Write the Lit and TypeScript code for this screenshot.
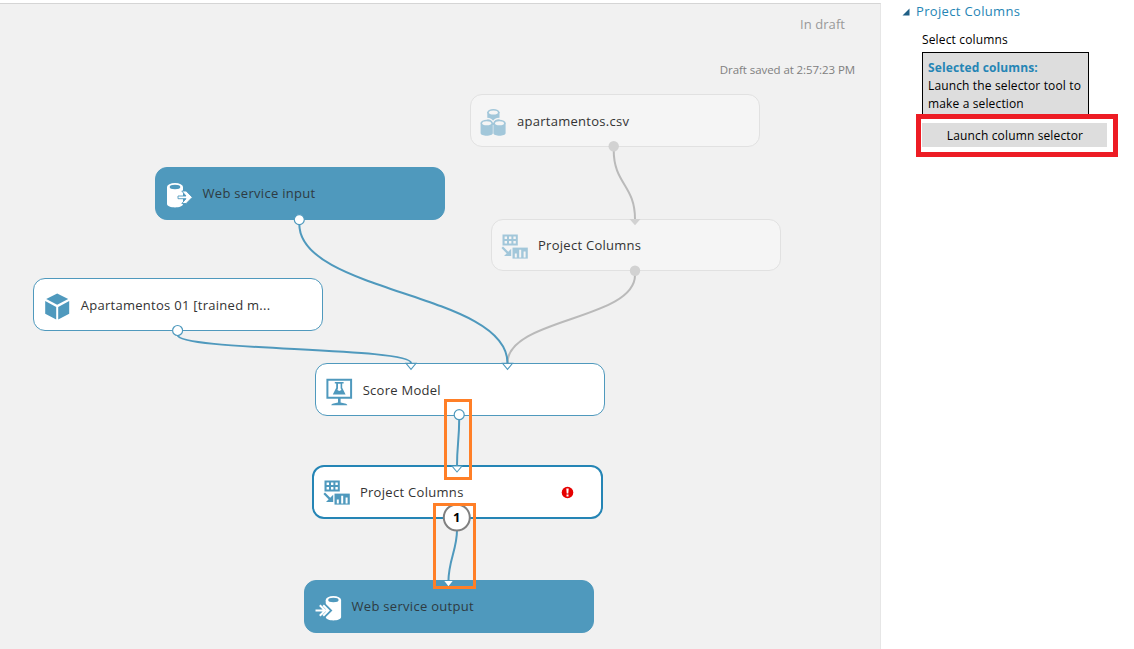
import { LitElement, html, css, svg } from "lit";
import { customElement, property } from "lit/decorators.js";
import { classMap } from "lit/directives/class-map.js";

type Kind = "dataset" | "input" | "output" | "columns" | "model" | "score";
interface NodeData {
  x: number; y: number; w: number; h: number;
  label: string; icon: Kind; variant: "plain" | "muted" | "solid" | "selected"; error?: boolean;
}

const NODES: NodeData[] = [
  { x: 470, y: 94, w: 290, h: 53, label: "apartamentos.csv", icon: "dataset", variant: "muted" },
  { x: 155, y: 167, w: 290, h: 53, label: "Web service input", icon: "input", variant: "solid" },
  { x: 491, y: 218.7, w: 290, h: 52.6, label: "Project Columns", icon: "columns", variant: "muted" },
  { x: 33.3, y: 278.4, w: 290, h: 52.6, label: "Apartamentos 01 [trained m...", icon: "model", variant: "plain" },
  { x: 315.2, y: 363, w: 290, h: 53, label: "Score Model", icon: "score", variant: "plain" },
  { x: 312.4, y: 465, w: 291, h: 53.6, label: "Project Columns", icon: "columns", variant: "selected", error: true },
  { x: 304, y: 580, w: 290, h: 53, label: "Web service output", icon: "output", variant: "solid" },
];

const cylinder = (x: number, y: number) => svg`
  <path d="M${x} ${y + 3} v10.2 c0 3.6 12.2 3.6 12.2 0 v-10.2z" fill="currentColor"/>
  <ellipse cx=${x + 6.1} cy=${y + 3.2} rx="6.1" ry="3.2" fill="currentColor"/>
  <ellipse cx=${x + 6.1} cy=${y + 3.5} rx="4.5" ry="2" fill="var(--hole)"/>`;

const ICONS: Record<Kind, unknown> = {
  dataset: svg`${cylinder(7.3, 0)}
    <path d="M.3 14c0-6 12.8-6 12.8 0M13.1 14c0-6 12.8-6 12.8 0" stroke="var(--hole)" stroke-width="1.4" fill="none"/>
    ${cylinder(0.6, 10.8)}${cylinder(13.4, 10.8)}`,
  input: svg`
    <path d="M1 5v17c0 4.5 16 4.5 16 0V5z" fill="currentColor"/>
    <ellipse cx="9" cy="5" rx="8" ry="4" fill="currentColor"/>
    <ellipse cx="9" cy="5" rx="5.3" ry="2.2" fill="var(--hole)"/>
    <path d="M12 14h8l-4.2-5h4.4l6.1 6.3-6.1 6.2h-4.4l4.2-4.8h-8z" fill="currentColor" stroke="var(--hole)" stroke-width=".9"/>`,
  output: svg`
    <path d="M10.7 5v17c0 4.5 15.4 4.5 15.4 0V5z" fill="currentColor"/>
    <ellipse cx="18.4" cy="5" rx="7.7" ry="4" fill="currentColor"/>
    <ellipse cx="18.4" cy="5" rx="5.2" ry="2.2" fill="var(--hole)"/>
    <path d="M8.6 9.8l5.7 5.7-5.7 5.7" fill="none" stroke="var(--hole)" stroke-width="4.4"/>
    <path d="M.5 15.5h12M4.8 10.2l5.3 5.3-5.3 5.3M8.2 10.2l5.3 5.3-5.3 5.3" fill="none" stroke="currentColor" stroke-width="2"/>`,
  columns: svg`
    <path d="M1.5 1.5h15.3v11H1.5z" fill="currentColor"/>
    <path d="M3.6 3.6h2.4v2.4h-2.4zM8 3.6h2.4v2.4h-2.4zM12.4 3.6h2.4v2.4h-2.4zM3.6 8h2.4v2.4h-2.4zM8 8h2.4v2.4h-2.4zM12.4 8h2.4v2.4h-2.4z" fill="var(--hole)"/>
    <path d="M11.5 14.6h15.3v11H11.5z" fill="currentColor"/>
    <path d="M13.8 20.5h2v3.9h-2zM18.2 16.8h2v7.6h-2zM22.6 18.5h2v5.9h-2z" fill="var(--hole)"/>
    <path d="M1.2 14.3l6.3 6.3" stroke="currentColor" stroke-width="2.2"/>
    <path d="M10.2 15.8v7.3H3z" fill="currentColor"/>`,
  model: svg`
    <path d="M13.2.6l11 5.3-11 5.8-11-5.8z" fill="currentColor"/>
    <path d="M1.2 8l11 5.9v12.6l-11-5.7zM25.2 8l-11 5.9v12.6l11-5.7z" fill="currentColor"/>`,
  score: svg`
    <path d="M1.4 1.7h23.7v18H1.4z" fill="none" stroke="currentColor" stroke-width="2"/>
    <path d="M12 20h2.6v4.6l4.4.8c1.5.3 2.3 1 2.3 1.8H5.3c0-.8.8-1.5 2.3-1.8l4.4-.8z" fill="currentColor"/>
    <path d="M8.8 4h8.8v1.6h-1.4v4.2l3.4 6.8H6.8l3.4-6.8V5.6H8.8z" fill="currentColor"/>
    <path d="M12 5.8h2.6v4.4l.9 1.9-2.3.9-1.8-1 .6-1.8z" fill="var(--hole)"/>`,
};

@customElement("flow-node")
class FlowNode extends LitElement {
  @property({ attribute: false }) node!: NodeData;
  static styles = css`
    :host { position: absolute; display: block; }
    .box {
      --hole: #fff; box-sizing: border-box; width: 100%; height: 100%;
      display: flex; align-items: center; padding: 0 28px 0 10px;
      border: 1.3px solid #4f99bd; border-radius: 12px; background: #fff;
      color: #4f99bd; font: 13px/20px "Open Sans", sans-serif;
    }
    .muted { --hole: #f5f5f5; color: #a2c7da; background: #f5f5f5; border-color: #e1e1e1; padding-left: 9px; }
    .solid { --hole: #4f99bd; color: #fff; background: #4f99bd; }
    .selected { border: 2px solid #2585b5; padding: 0 27px 0 9px; }
    svg { width: 28px; height: 28px; flex: none; margin-top: 4px; }
    .selected svg { margin-top: 2px; }
    .label { flex: 1; margin-left: 8.5px; letter-spacing: .27px; color: #333; white-space: nowrap; }
    .muted .label { margin-left: 9px; letter-spacing: .27px; }
    .solid .label { color: #2e3b42; margin-bottom: 2px; letter-spacing: .3px; }
    .selected .label { letter-spacing: .3px; }
    .box .error { width: 13px; height: 13px; margin-top: 1px; }
  `;
  render() {
    const n = this.node;
    return html`<div class=${classMap({ box: true, [n.variant]: true })}>
      <svg viewBox="0 0 28 28">${ICONS[n.icon]}</svg>
      <span class="label">${n.label}</span>
      ${n.error ? html`<svg class="error" viewBox="0 0 13 13">
        <circle cx="6.5" cy="6.5" r="5.8" fill="#e60000"/>
        <path d="M5.3 2.5h2.4l-.4 5H5.7zM5.5 8.6h2v1.9h-2z" fill="#fff"/></svg>` : ""}
    </div>`;
  }
}

const port = (x: number, y: number) => svg`<circle cx=${x} cy=${y} r="5" fill="#fff" stroke="#4f99bd" stroke-width="1.2"/>`;
const mutedPort = (x: number, y: number) => svg`<circle cx=${x} cy=${y} r="5.2" fill="#d2d2d2"/>`;
const inlet = (x: number, y: number) => svg`<path d="M${x - 5} ${y}h10l-5 6z" fill="#fff" stroke="#4f99bd" stroke-width="1.1"/>`;

@customElement("flow-canvas")
class FlowCanvas extends LitElement {
  static styles = css`
    :host { display: block; position: relative; overflow: hidden; background: #f1f1f1; border-top: 1px solid #d5d5d5; border-right: 1px solid #e6e6e6; margin-top: 3px; }
    .status { display: flex; flex-direction: column; align-items: flex-end; padding: 10px 25px 0 0; font-family: "Open Sans", sans-serif; }
    .state { font-size: 13px; line-height: 20px; letter-spacing: .05px; color: #999; margin-right: 10px; }
    .saved { font-size: 11.5px; line-height: 18px; letter-spacing: -.08px; color: #808080; margin-top: 27px; }
    .plane { position: absolute; left: 0; top: -4px; width: 880px; height: 649px; }
    .wires, .ports { position: absolute; left: 0; top: 0; width: 880px; height: 649px; }
    .step { font: bold 13px "Open Sans", sans-serif; fill: #000; text-anchor: middle; }
  `;
  render() {
    return html`
      <div class="status"><span class="state">In draft</span><span class="saved">Draft saved at 2:57:23 PM</span></div>
      <div class="plane">
        ${NODES.map((n) => html`<flow-node .node=${n} style="left:${n.x}px;top:${n.y}px;width:${n.w}px;height:${n.h}px"></flow-node>`)}
        <svg class="wires" viewBox="0 0 880 649" fill="none" stroke-width="2">
          <g stroke="#bababa">
            <path d="M613.7 150C613.7 184 635 185 635 219"/>
            <path d="M635 275C635 320 507.5 318 507.5 363"/>
          </g>
          <g stroke="#4f99bd">
            <path d="M299.3 224C299.3 293 507.5 293 507.5 363"/>
            <path d="M177.6 335C177.6 351 411 347 411 363"/>
            <path d="M459.2 419C459.2 440 457 445 457 466"/>
            <path d="M457 530C457 550 448.4 560 448.4 582"/>
          </g>
        </svg>
        <svg class="ports" viewBox="0 0 880 649">
          ${mutedPort(613.7, 146.3)}${mutedPort(635, 270.8)}
          <path d="M629.5 219h11l-5.5 6.3z" fill="#d2d2d2"/>
          ${port(299.3, 219.6)}${port(177.6, 330.5)}${port(459.2, 414.7)}
          ${inlet(411, 363.4)}${inlet(507.5, 363.4)}${inlet(457, 466)}
          <path d="M444.4 581h8.2l-4.1 5.2z" fill="#fff"/>
          <circle cx="456.8" cy="517.5" r="13" fill="#fff" stroke="#808080" stroke-width="2"/>
          <text class="step" x="456.8" y="522">1</text>
          <g fill="none" stroke="#ff7f27" stroke-width="3">
            <path d="M445.5 400.5h25v78h-25zM434.5 504.5h40v83h-40z"/>
          </g>
        </svg>
      </div>`;
  }
}

@customElement("property-panel")
class PropertyPanel extends LitElement {
  static styles = css`
    :host { display: block; position: relative; background: #fff; padding: 1px 16px 0 21px; font: 12px/18px "Open Sans", sans-serif; color: #000; }
    .head { display: flex; align-items: center; font-size: 13px; letter-spacing: .34px; color: #2585b5; height: 19px; }
    .caret { width: 8px; height: 8px; margin: 2px 6px 0 0; }
    .body { padding-left: 20px; }
    .name { margin: 11px 0 3px; letter-spacing: .15px; }
    .card { box-sizing: border-box; width: 167px; height: 66px; padding: 6px 5px 0; border: 1px solid #000; background: #ddd; letter-spacing: .14px; white-space: nowrap; }
    .title { font-weight: bold; color: #2585b5; letter-spacing: .12px; }
    .callout { box-sizing: border-box; position: absolute; left: 35px; top: 114px; width: 202px; height: 43px; border: 5px solid #ed1c24; background: #fff; padding: 4px 6px 5px 1px; }
    .launch { display: block; width: 185px; height: 24px; padding: 2px 0 0 1px; border: 0; background: #ddd; font: inherit; letter-spacing: .14px; color: #000; }
  `;
  render() {
    return html`
      <div class="head"><svg class="caret" viewBox="0 0 8 8"><path d="M7.5.5v7H.5z" fill="#1f5f85"/></svg>Project Columns</div>
      <div class="body">
        <div class="name">Select columns</div>
        <div class="card"><div class="title">Selected columns:</div>Launch the selector tool to<br>make a selection</div>
      </div>
      <div class="callout"><button class="launch">Launch column selector</button></div>`;
  }
}

@customElement("app-root")
class AppRoot extends LitElement {
  static styles = css`
    :host { display: grid; grid-template-columns: 881px 1fr; width: 1134px; height: 649px; background: #fff; overflow: hidden; }
  `;
  render() {
    return html`<flow-canvas></flow-canvas><property-panel></property-panel>`;
  }
}
